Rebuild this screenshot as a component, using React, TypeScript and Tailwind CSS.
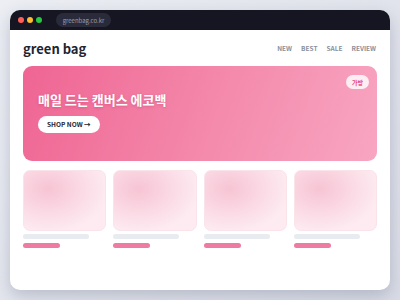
import React from "react";

const font = { fontFamily: '"Noto Sans CJK KR", "Noto Sans", sans-serif' };

function Card() {
  return (
    <div className="flex flex-col">
      <div className="h-[61px] rounded-[7px] border border-[#fbe3ea] bg-[radial-gradient(ellipse_at_30%_30%,#f7c4d4_0%,#fbdce6_45%,#fdebf1_75%)]" />
      <div className="mt-[3px] h-[5px] w-[66px] rounded-full bg-[#e8ebef]" />
      <div className="mt-[4px] h-[5px] w-[37px] rounded-full bg-[#ee7ba2]" />
    </div>
  );
}

export default function App() {
  return (
    <div
      className="w-[400px] h-[300px] bg-[linear-gradient(135deg,#eceef4,#d9dce6)] p-[10px] overflow-hidden"
      style={font}
    >
      <div className="w-[380px] h-[280px] rounded-[10px] bg-white overflow-hidden shadow-[0_6px_16px_rgba(60,70,100,0.25)] flex flex-col">
        <div className="h-[20px] bg-[#151621] flex items-center pl-[8px] gap-[3px]">
          <span className="w-[6px] h-[6px] rounded-full bg-[#ff5f57]" />
          <span className="w-[6px] h-[6px] rounded-full bg-[#febc2e]" />
          <span className="w-[6px] h-[6px] rounded-full bg-[#28c840]" />
          <div className="ml-[11px] h-[14px] w-[55px] rounded-full bg-[#2a2b3a] flex items-center justify-center text-[6px] text-[#9a9cab]">
            greenbag.co.kr
          </div>
        </div>
        <div className="flex-1 px-[13px]">
          <div className="flex items-center justify-between h-[36px] pt-[2px]">
            <div className="text-[13px] font-bold text-[#1f2430] leading-[16px]">green bag</div>
            <div className="flex gap-[9px] text-[6.5px] font-semibold text-[#8a909c] pr-[1px]">
              <span>NEW</span>
              <span>BEST</span>
              <span>SALE</span>
              <span>REVIEW</span>
            </div>
          </div>
          <div className="relative h-[95px] rounded-[9px] bg-[linear-gradient(110deg,#ef6593_0%,#f48aac_55%,#f8a6c2_100%)] px-[15px] pt-[26px]">
            <div className="absolute right-[8px] top-[9px] h-[14px] px-[6px] rounded-full bg-[#fdeef3] flex items-center text-[6px] font-bold text-[#e4487c]">
              가방
            </div>
            <div className="text-[13px] font-bold text-white leading-[16px] [text-shadow:0_1px_3px_rgba(180,40,90,0.35)]">
              매일 드는 캔버스 에코백
            </div>
            <div className="mt-[8px] inline-flex h-[17px] px-[9px] rounded-full bg-white items-center text-[6.5px] font-bold text-[#1f2430]">
              SHOP NOW →
            </div>
          </div>
          <div className="grid grid-cols-4 gap-[7px] mt-[9px]">
            <Card />
            <Card />
            <Card />
            <Card />
          </div>
        </div>
      </div>
    </div>
  );
}
